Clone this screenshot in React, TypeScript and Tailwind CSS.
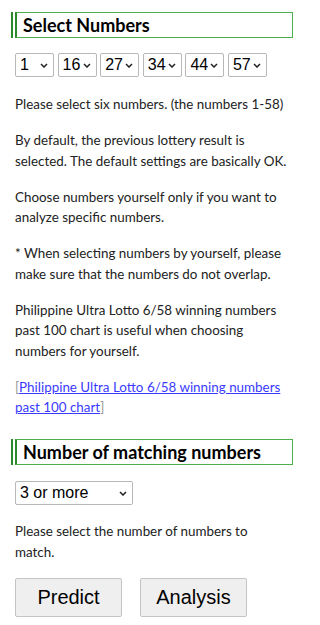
import { useState } from "react";

const NUMBERS = Array.from({ length: 58 }, (_, i) => i + 1);
const DEFAULTS = [1, 16, 27, 34, 44, 57];

function Heading({ children }: { children: React.ReactNode }) {
  return (
    <div className="ml-[11px] mr-[7px] border-l-2 border-[#2b8a2b] pl-[2px]">
      <h2 className="border border-l-2 border-[#4caf4c] border-l-[#2b8a2b] px-[6px] text-[18px] font-bold leading-[24px] text-black">
        {children}
      </h2>
    </div>
  );
}

type SelectProps = {
  value: string;
  onChange: (v: string) => void;
  width: string;
  options: { value: string; label: string }[];
};

function Select({ value, onChange, width, options }: SelectProps) {
  return (
    <div className={`relative ${width}`}>
      <select
        value={value}
        onChange={(e) => onChange(e.target.value)}
        className="h-[24px] w-full appearance-none rounded-[2px] border border-[#b8b8b8] bg-white pl-[4px] font-['Liberation_Sans',Arial,sans-serif] text-[16px] leading-[22px] text-black outline-none"
      >
        {options.map((o) => (
          <option key={o.value} value={o.value}>
            {o.label}
          </option>
        ))}
      </select>
      <svg
        viewBox="0 0 8 5"
        className="pointer-events-none absolute right-[6px] top-[10px] h-[5px] w-[8px] text-[#222]"
        fill="none"
        stroke="currentColor"
        strokeWidth="1.5"
      >
        <path d="M1 1l3 3 3-3" />
      </svg>
    </div>
  );
}

const numberOptions = NUMBERS.map((v) => ({ value: String(v), label: String(v) }));

export default function App() {
  const [picks, setPicks] = useState<number[]>(DEFAULTS);
  const [match, setMatch] = useState("3");

  return (
    <div className="min-h-[625px] w-[300px] bg-white pt-[12px] font-['Lato',sans-serif] text-[13.4px] leading-[20.5px] text-[#222]">
      <Heading>Select Numbers</Heading>

      <div className="mt-[15px] flex gap-[3.6px] pl-[15px]">
        {picks.map((n, i) => (
          <Select
            key={i}
            value={String(n)}
            width="w-[39px]"
            options={numberOptions}
            onChange={(v) => {
              const next = [...picks];
              next[i] = Number(v);
              setPicks(next);
            }}
          />
        ))}
      </div>

      <div className="space-y-[15.5px] pl-[15px] pr-[8px] pt-[17px]">
        <p>Please select six numbers. (the numbers 1-58)</p>
        <p>By default, the previous lottery result is selected. The default settings are basically OK.</p>
        <p>Choose numbers yourself only if you want to analyze specific numbers.</p>
        <p>* When selecting numbers by yourself, please make sure that the numbers do not overlap.</p>
        <p>Philippine Ultra Lotto 6/58 winning numbers past 100 chart is useful when choosing numbers for yourself.</p>
        <p>
          <span className="text-[#999]">[</span>
          <a href="#" className="text-[#3b3bff] underline">
            Philippine Ultra Lotto 6/58 winning numbers past 100 chart
          </a>
          <span className="text-[#999]">]</span>
        </p>
      </div>

      <div className="mt-[21.5px]">
        <Heading>Number of matching numbers</Heading>
      </div>

      <div className="mt-[16px] pl-[15px]">
        <Select
          value={match}
          onChange={setMatch}
          width="w-[118px]"
          options={[
            { value: "3", label: "3 or more" },
            { value: "4", label: "4 or more" },
            { value: "5", label: "5 or more" },
            { value: "6", label: "6" },
          ]}
        />
      </div>

      <p className="mt-[16px] w-[265px] pl-[15px]">Please select the number of numbers to match.</p>

      <div className="mt-[16px] flex gap-[18px] pl-[15px]">
        <button className="h-[39px] w-[107px] rounded-[2px] border border-[#c4c4c4] bg-[#efefef] font-['Liberation_Sans',Arial,sans-serif] text-[20px] text-black">
          Predict
        </button>
        <button className="h-[39px] w-[107px] rounded-[2px] border border-[#c4c4c4] bg-[#efefef] font-['Liberation_Sans',Arial,sans-serif] text-[20px] text-black">
          Analysis
        </button>
      </div>
    </div>
  );
}
